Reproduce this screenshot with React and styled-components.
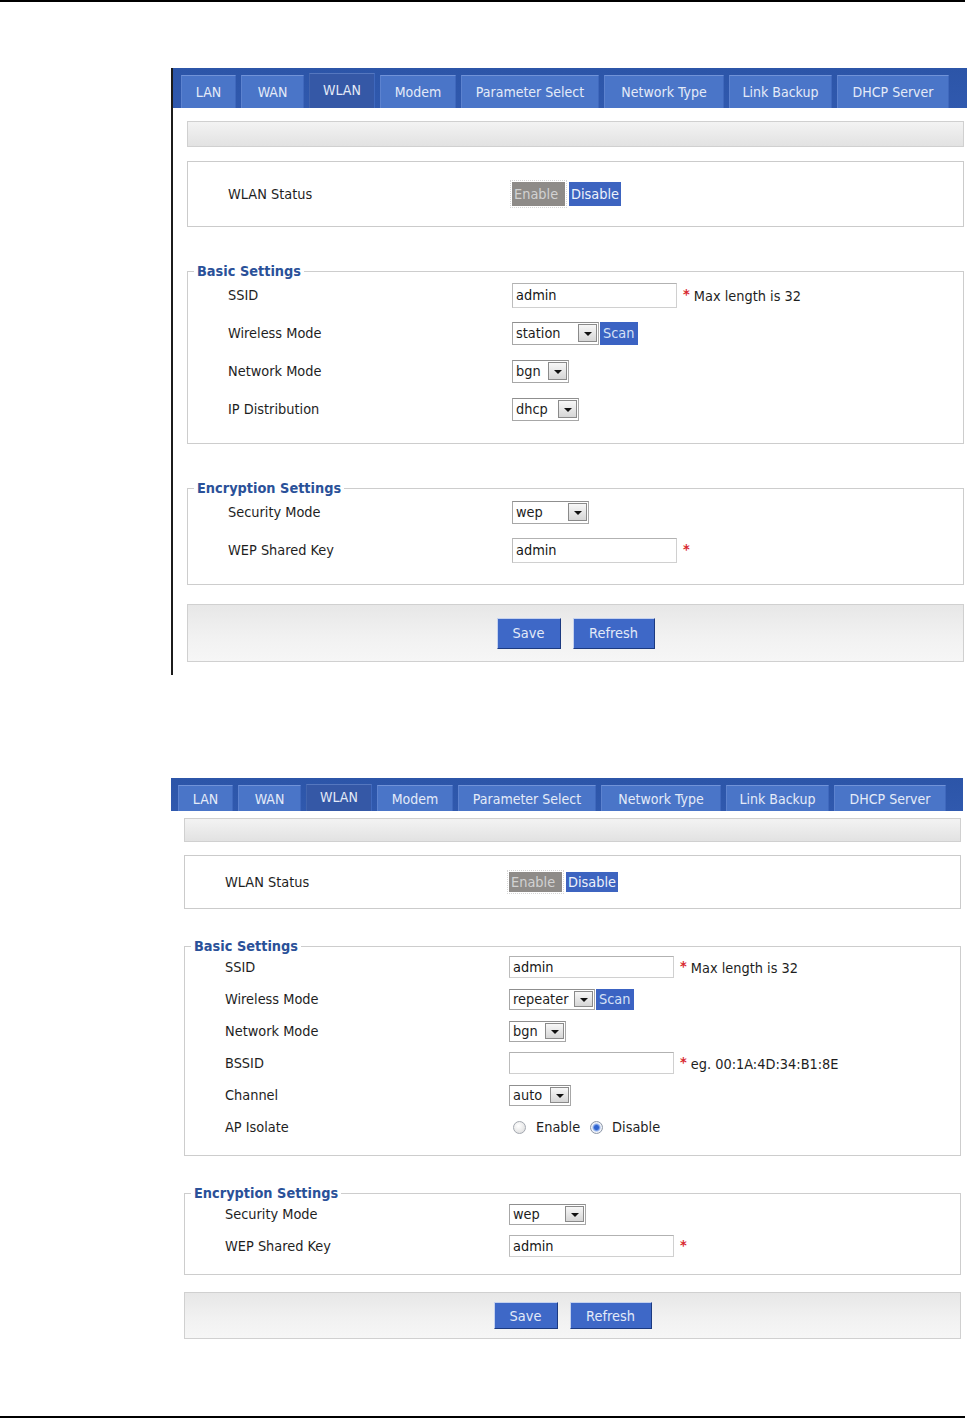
import React from "react";
import styled, { createGlobalStyle, css, ThemeProvider } from "styled-components";

const GlobalStyle = createGlobalStyle`
  html, body { margin: 0; padding: 0; background: #ffffff; }
  body {
    font-family: "DejaVu Sans Condensed", "Liberation Sans", Arial, sans-serif;
    font-size: 14.4px;
    color: #1d1d1d;
  }
  #root { width: 970px; }
`;

const METRICS = {
  big: {
    top: 66, width: 796, edge: 2, tabsPad: 8, barH: 40, tabH: 33, activeExtra: 2,
    padL: 14, padR: 3, topGap: 13, grayH: 26, grayGap: 14, statusH: 66, toggleH: 24,
    fsGap: 36, legendLH: 16, rowsShift: -3, rowH: 38, fsPadB: 15, actionsGap: 19,
    actionsH: 58, actionBtnH: 31, inputH: 25, selectH: 23, tail: 13,
  },
  small: {
    top: 103, width: 792, edge: 0, tabsPad: 7, barH: 33, tabH: 26, activeExtra: 1,
    padL: 13, padR: 2, topGap: 7, grayH: 24, grayGap: 13, statusH: 54, toggleH: 20,
    fsGap: 30, legendLH: 14, rowsShift: -2, rowH: 32, fsPadB: 12, actionsGap: 17,
    actionsH: 47, actionBtnH: 27, inputH: 22, selectH: 21, tail: 6,
  },
};

const t = (k) => (p) => p.theme[k];

const TABS = [
  ["LAN", 55], ["WAN", 63], ["WLAN", 66], ["Modem", 76],
  ["Parameter Select", 138], ["Network Type", 120], ["Link Backup", 103], ["DHCP Server", 112],
];

const Page = styled.div`
  width: 970px;
  height: 1419px;
  overflow: hidden;
  display: flex;
  flex-direction: column;
`;

const Rule = styled.div`
  flex: none;
  width: 965px;
  height: 2px;
  background: #000;
  ${(p) => p.$bottom && css`margin-top: auto; margin-bottom: 1px;`}
`;

const Panel = styled.section`
  flex: none;
  margin: ${t("top")}px 0 0 171px;
  width: ${t("width")}px;
  box-sizing: border-box;
  border-left: ${t("edge")}px solid #1c1c1c;
  padding-bottom: ${t("tail")}px;
`;

const TabBar = styled.nav`
  height: ${t("barH")}px;
  background: linear-gradient(#2c55a8, #3059ae);
  display: flex;
  align-items: flex-end;
  gap: 5px;
  padding-left: ${t("tabsPad")}px;
`;

const Tab = styled.div`
  flex: none;
  width: ${(p) => p.$w}px;
  height: ${t("tabH")}px;
  box-sizing: border-box;
  background: #4a75c8;
  border-top: 1px solid #7193d8;
  border-left: 1px solid #5c82cf;
  border-right: 1px solid #3f68bd;
  color: #e4ebf8;
  font-size: 14px;
  display: flex;
  align-items: center;
  justify-content: center;
  white-space: nowrap;
  ${(p) =>
    p.$active &&
    css`
      height: ${p.theme.tabH + p.theme.activeExtra}px;
      background: #3558a6;
      border-top-color: #5577bf;
      border-left-color: #4164ae;
      padding-bottom: 3px;
    `}
`;

const Body = styled.div`
  padding: ${t("topGap")}px ${t("padR")}px 0 ${t("padL")}px;
  display: flex;
  flex-direction: column;
`;

const GrayStrip = styled.div`
  height: ${t("grayH")}px;
  box-sizing: border-box;
  border: 1px solid #d0d0d0;
  background: linear-gradient(#f3f3f3, #e2e2e2);
`;

const StatusBox = styled.div`
  margin-top: ${t("grayGap")}px;
  height: ${t("statusH")}px;
  box-sizing: border-box;
  border: 1px solid #cbcbcb;
  padding-left: 40px;
  display: flex;
  align-items: center;
`;

const Row = styled.div`
  height: ${t("rowH")}px;
  display: grid;
  grid-template-columns: 284px 1fr;
  align-items: center;
`;

const Label = styled.span`
  color: #1e1e1e;
  white-space: nowrap;
`;

const Control = styled.div`
  display: flex;
  align-items: center;
  white-space: nowrap;
`;

const Toggle = styled.span`
  height: ${t("toggleH")}px;
  box-sizing: border-box;
  padding: 0 2px;
  display: inline-flex;
  align-items: center;
  ${(p) =>
    p.$off
      ? css`
          width: 53px;
          background: #8e8b88;
          color: #d2d2d2;
          outline: 1px dotted #d6d6d6;
          outline-offset: 1px;
          margin-right: 4px;
        `
      : css`
          width: 52px;
          background: #3d64c0;
          color: #eef2fb;
        `}
`;

const SettingsSet = styled.fieldset`
  margin: ${t("fsGap")}px 0 0;
  padding: 0 0 ${t("fsPadB")}px 6px;
  border: 1px solid #cdcdcd;
  min-width: 0;
`;

const SetLegend = styled.legend`
  padding: 0 3px;
  font-weight: bold;
  color: #2a5199;
  line-height: ${t("legendLH")}px;
`;

const RowList = styled.div`
  margin-top: ${t("rowsShift")}px;
  padding-left: 34px;
  display: flex;
  flex-direction: column;
`;

const TextInput = styled.input`
  width: 165px;
  height: ${t("inputH")}px;
  box-sizing: border-box;
  margin: 0;
  padding: 0 3px;
  border: 1px solid #d0d0d0;
  border-top-color: #b2b2b2;
  border-left-color: #bcbcbc;
  background: #fff;
  font: inherit;
  color: #151515;
  outline: none;
`;

const SelectBox = styled.div`
  width: ${(p) => p.$w}px;
  height: ${t("selectH")}px;
  box-sizing: border-box;
  border: 1px solid #a7a7a7;
  border-top-color: #8f8f8f;
  background: #fff;
  display: flex;
  align-items: center;
  justify-content: space-between;
  padding: 0 1px 0 3px;
`;

const DropButton = styled.span`
  width: 19px;
  height: ${(p) => p.theme.selectH - 5}px;
  box-sizing: border-box;
  border: 1px solid #8a8a8a;
  background: linear-gradient(#f7f7f7, #d6d6d6);
  display: flex;
  align-items: center;
  justify-content: center;
  &::after {
    content: "";
    border-left: 4px solid transparent;
    border-right: 4px solid transparent;
    border-top: 4px solid #111;
    margin-top: 1px;
  }
`;

const ScanButton = styled.span`
  height: ${t("selectH")}px;
  box-sizing: border-box;
  padding: 0 4px 0 3px;
  margin-left: 1px;
  background: #3b63c3;
  color: #d6e1f6;
  display: inline-flex;
  align-items: center;
`;

const Note = styled.span`
  margin-left: 6px;
  color: #1e1e1e;
`;

const Star = styled.span`
  color: #d8262e;
  font-weight: bold;
  margin-right: 4px;
  vertical-align: 2px;
`;

const RadioMark = styled.span`
  width: 13px;
  height: 13px;
  box-sizing: border-box;
  border-radius: 50%;
  border: 1px solid #a3a8b0;
  background: radial-gradient(circle at 40% 35%, #ffffff, #d9d9d9);
  margin: 0 10px 0 4px;
  ${(p) =>
    p.$checked &&
    css`
      margin-left: 0;
      margin-right: 9px;
      border-color: #8d97a8;
      background: radial-gradient(circle, #2f63cf 0 2px, #86a8ea 3.2px, #f4f6fa 4.6px, #d5d8de 100%);
    `}
`;

const RadioText = styled.span`
  margin-right: 10px;
`;

const ActionBar = styled.div`
  margin-top: ${t("actionsGap")}px;
  height: ${t("actionsH")}px;
  box-sizing: border-box;
  border: 1px solid #d0d0d0;
  background: linear-gradient(#e7e7e7, #f1f1f1 55%, #f6f6f6);
  display: flex;
  align-items: center;
  justify-content: center;
  gap: 12px;
`;

const ActionButton = styled.button`
  width: ${(p) => p.$w}px;
  height: ${t("actionBtnH")}px;
  margin: 0;
  padding: 0;
  box-sizing: border-box;
  background: #3e68c7;
  color: #e3eaf8;
  border: 1px solid;
  border-color: #c4d1ee #1c3a80 #1c3a80 #c4d1ee;
  font: inherit;
`;

function Select({ w, value }) {
  return (
    <SelectBox $w={w}>
      <span>{value}</span>
      <DropButton />
    </SelectBox>
  );
}

function Field({ label, children }) {
  return (
    <Row>
      <Label>{label}</Label>
      <Control>{children}</Control>
    </Row>
  );
}

function Required({ text }) {
  return (
    <Note>
      <Star>*</Star>
      {text}
    </Note>
  );
}

function WlanPanel({ size, mode }) {
  const repeater = mode === "repeater";
  return (
    <ThemeProvider theme={METRICS[size]}>
      <Panel>
        <TabBar>
          {TABS.map(([name, w]) => (
            <Tab key={name} $w={w} $active={name === "WLAN"}>
              {name}
            </Tab>
          ))}
        </TabBar>
        <Body>
          <GrayStrip />
          <StatusBox>
            <Field label="WLAN Status">
              <Toggle $off>Enable</Toggle>
              <Toggle>Disable</Toggle>
            </Field>
          </StatusBox>

          <SettingsSet>
            <SetLegend>Basic Settings</SetLegend>
            <RowList>
              <Field label="SSID">
                <TextInput defaultValue="admin" readOnly />
                <Required text="Max length is 32" />
              </Field>
              <Field label="Wireless Mode">
                <Select w={repeater ? 86 : 87} value={repeater ? "repeater" : "station"} />
                <ScanButton>Scan</ScanButton>
              </Field>
              <Field label="Network Mode">
                <Select w={57} value="bgn" />
              </Field>
              {repeater ? (
                <>
                  <Field label="BSSID">
                    <TextInput defaultValue="" readOnly />
                    <Required text="eg. 00:1A:4D:34:B1:8E" />
                  </Field>
                  <Field label="Channel">
                    <Select w={62} value="auto" />
                  </Field>
                  <Field label="AP Isolate">
                    <RadioMark />
                    <RadioText>Enable</RadioText>
                    <RadioMark $checked />
                    <RadioText>Disable</RadioText>
                  </Field>
                </>
              ) : (
                <Field label="IP Distribution">
                  <Select w={67} value="dhcp" />
                </Field>
              )}
            </RowList>
          </SettingsSet>

          <SettingsSet>
            <SetLegend>Encryption Settings</SetLegend>
            <RowList>
              <Field label="Security Mode">
                <Select w={77} value="wep" />
              </Field>
              <Field label="WEP Shared Key">
                <TextInput defaultValue="admin" readOnly />
                <Required text="" />
              </Field>
            </RowList>
          </SettingsSet>

          <ActionBar>
            <ActionButton $w={64}>Save</ActionButton>
            <ActionButton $w={82}>Refresh</ActionButton>
          </ActionBar>
        </Body>
      </Panel>
    </ThemeProvider>
  );
}

export default function App() {
  return (
    <>
      <GlobalStyle />
      <Page>
        <Rule />
        <WlanPanel size="big" mode="station" />
        <WlanPanel size="small" mode="repeater" />
        <Rule $bottom />
      </Page>
    </>
  );
}
